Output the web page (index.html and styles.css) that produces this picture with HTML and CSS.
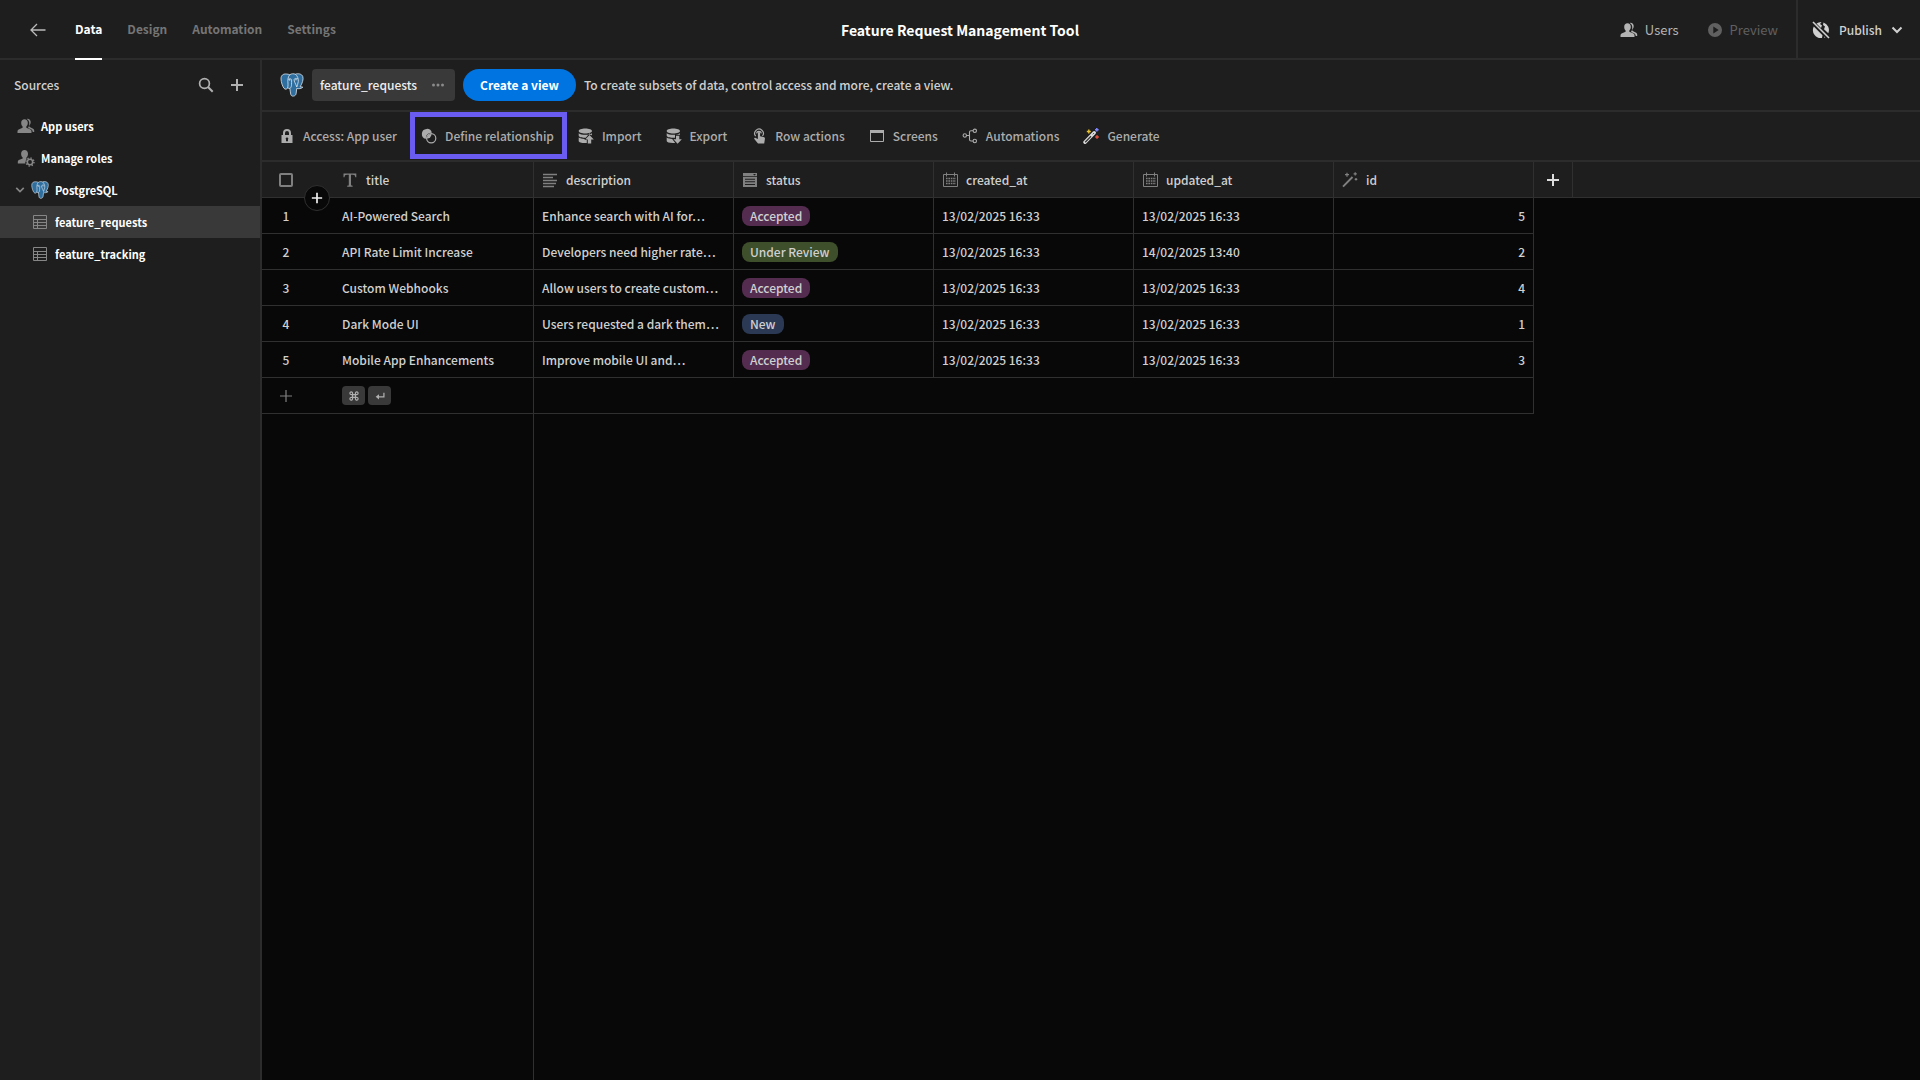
FILE: index.html
```
<!DOCTYPE html>
<html lang="en">
<head>
<meta charset="utf-8">
<title>Feature Request Management Tool</title>
<meta name="viewport" content="width=device-width, initial-scale=1">
<link rel="stylesheet" href="styles.css">
</head>
<body>
<svg class="sprite" aria-hidden="true">
  <symbol id="i-back" viewBox="0 0 16 16"><path d="M15.500 8H1M7 2L1 8l6 6" fill="none" stroke="currentColor" stroke-width="1.300"/></symbol>
  <symbol id="i-users" viewBox="0 0 18 16"><path d="M7.500 1.200c2 0 3.300 1.500 3.300 3.500 0 1.600-.6 2.900-1.500 3.700v1.400l4.200 1.800c.7.300 1 .9 1 1.700V15H.5v-1.700c0-.8.400-1.400 1.100-1.700l4-1.800V8.400C4.700 7.600 4.200 6.300 4.200 4.700c0-2 1.300-3.500 3.300-3.500z" fill="currentColor"/><path d="M10.500.8c1.900 0 3.200 1.400 3.200 3.300 0 1.500-.5 2.600-1.400 3.400v1.300l3.800 2c.7.400 1.100.9 1.100 1.700V14h-1.500c-.1-1.500-.7-2.200-1.700-2.700l-3-1.400c1-1.200 1.400-2.900 1.200-5.300C12 2.900 11.300 1.700 9.700.9z" fill="currentColor"/></symbol>
  <symbol id="i-roles" viewBox="0 0 18 18"><path d="M7.500 1C9.600 1 11 2.600 11 4.700c0 1.700-.6 3-1.600 3.900v1.300l.3.200c-1 1.100-1.500 2.500-1.400 4.300H.8v-1.700c0-.8.400-1.400 1-1.700l3.900-1.600V8.600C4.700 7.700 4.100 6.400 4.100 4.700 4.100 2.600 5.500 1 7.500 1z" fill="currentColor"/><circle cx="13" cy="13" r="2.700" fill="none" stroke="currentColor" stroke-width="1.600"/><circle cx="13" cy="13" r="4" fill="none" stroke="currentColor" stroke-width="1.400" stroke-dasharray="1.300 1.840"/></symbol>
  <symbol id="i-search" viewBox="0 0 16 16"><circle cx="6.500" cy="6.500" r="4.900" fill="none" stroke="currentColor" stroke-width="1.700"/><path d="M10 10l4.700 4.700" stroke="currentColor" stroke-width="2"/></symbol>
  <symbol id="i-plus" viewBox="0 0 14 14"><path d="M7 1v12M1 7h12" stroke="currentColor" stroke-width="2"/></symbol>
  <symbol id="i-plus-thin" viewBox="0 0 14 14"><path d="M7 1v12M1 7h12" stroke="currentColor" stroke-width="1.200"/></symbol>
  <symbol id="i-chevron" viewBox="0 0 12 12"><path d="M1.500 3.500L6 8l4.500-4.500" fill="none" stroke="currentColor" stroke-width="2"/></symbol>
  <symbol id="i-table" viewBox="0 0 16 16"><path d="M1.500 1.500h13v13h-13zM1.500 5.500h13M1.500 8.500h13M1.500 11.500h13M5.500 5.500v9" fill="none" stroke="currentColor"/></symbol>
  <symbol id="i-postgres" viewBox="0 0 24 24"><path d="M6.500 1C3 .6.800 2.600 1 6c.1 3 1.500 7.500 3 9.300 1.300 1.500 2.700.9 3.800-.3l2.100.5c.4 1.500.2 3.500.8 5.700.4 1.500 1.300 2.100 2.700 1.900 1.700-.2 2.600-1.200 2.800-3l.5-4.600c1.800.4 4.700.2 6.100-1.300-.5-.5-1.700-.2-2.700-.4 2.200-3.300 3.600-7.600 2.700-10.200C21.800.8 18.300.2 15.300 1.200 13.700.6 11.500.5 9.800 1.700 8.800 1.300 7.600 1.100 6.500 1z" fill="#2f6f9f" stroke="#dfe7ee" stroke-width=".8"/><path d="M9.800 1.700C7.900 3.500 7.600 7 8 11.200c.1 1.500-.1 2.700-.5 3.600M15.300 1.200c2 1.500 3.300 4.300 3 7.300-.2 1.800-1 3.800-1.500 5.500M8.100 6.300c1.600-.9 3.300-.6 3.500.8.200 1.800-.2 2.800-.1 4.200.1 1.700-.3 3-1.600 4.200M17.800 5.800c-1.400-.7-3.500-.5-3.700.8-.2 1.800 1.500 4 2.700 7.400" fill="none" stroke="#dfe7ee" stroke-width=".8"/><circle cx="9.700" cy="6.900" r=".6" fill="#fff"/><circle cx="16" cy="6.700" r=".6" fill="#fff"/></symbol>
  <symbol id="i-lock" viewBox="0 0 16 16"><path d="M4 7V5a4 4 0 0 1 8 0v2h1.500v8h-11V7zm2 0h4V5a2 2 0 0 0-4 0zm3 6.200v-1.600a1.300 1.300 0 1 0-2 0v1.600z" fill="currentColor" fill-rule="evenodd"/></symbol>
  <symbol id="i-relation" viewBox="0 0 16 16"><circle cx="10.200" cy="10.200" r="4.600" fill="none" stroke="currentColor" stroke-width="1.200"/><path d="M10.900 4.700A5.100 5.100 0 1 0 4.700 10.900a5.600 5.600 0 0 1 6.200-6.200z" fill="currentColor"/><path d="M10.500 6a4.500 4.500 0 0 1-4.600 4.600A4.500 4.500 0 0 1 10.500 6z" fill="currentColor"/></symbol>
  <symbol id="i-import" viewBox="0 0 16 16"><path d="M.7 3C.7 1.500 3.600.5 7.300.5S14 1.500 14 3s-3 2.500-6.700 2.500S.7 4.500.7 3zM.7 5.200c1.300 1 3.800 1.500 6.600 1.500 2.700 0 5.200-.5 6.700-1.500v2.300l-2.500-2.300L7.800 9.700H7C3.300 9.700.7 8.700.7 7.400zM.7 9.600c1.500 1 3.800 1.500 6.500 1.400l-1 .9h2.600V15c-4.600.3-8.100-.6-8.100-2z" fill="currentColor"/><path d="M11.500 7l4.300 4.500h-2.600v4h-3.400v-4H7.200z" fill="currentColor"/></symbol>
  <symbol id="i-export" viewBox="0 0 16 16"><path d="M.7 3C.7 1.500 3.600.5 7.300.5S14 1.500 14 3s-3 2.500-6.700 2.500S.7 4.500.7 3zM.7 5.200c1.300 1 3.800 1.500 6.600 1.500 2.700 0 5.200-.5 6.700-1.500v1.500H9v3H7C3.300 9.700.7 8.700.7 7.400zM.7 9.600c1.500 1 3.500 1.400 5.500 1.400l3 3.900C4.200 15.300.7 14.400.7 13z" fill="currentColor"/><path d="M10 7.700h3.300v3.600h2.500l-4.200 4.400-4.200-4.400H10z" fill="currentColor"/></symbol>
  <symbol id="i-tap" viewBox="0 0 16 16"><path d="M4.700 8.200A4.300 4.300 0 1 1 11.500 8M5.500 5.300a2.500 2.500 0 0 1 4.900 0" fill="none" stroke="currentColor" stroke-width="1.200"/><path d="M6.900 5a1.100 1.100 0 0 1 2.200 0v3.300l3.400.8c1.200.3 1.600.9 1.400 2l-.7 4.400H7L3.300 11c-.5-.7.500-1.600 1.300-1.100L6.900 11z" fill="currentColor"/></symbol>
  <symbol id="i-screen" viewBox="0 0 16 16"><path d="M1.500 2.500h13v11h-13z" fill="none" stroke="currentColor"/><path d="M1 2h14v3H1z" fill="currentColor"/></symbol>
  <symbol id="i-flow" viewBox="0 0 16 16"><g fill="none" stroke="currentColor" stroke-width="1.100"><circle cx="2.800" cy="7.500" r="1.700"/><circle cx="12.800" cy="2.800" r="1.700"/><circle cx="12.800" cy="13" r="1.700"/><path d="M4.500 7.500h3M11 2.800H9c-1 0-1.500.4-1.500 1.300v7.500c0 1 .5 1.400 1.500 1.400h2"/></g></symbol>
  <symbol id="i-generate" viewBox="0 0 16 16"><path d="M2 14.300l9.200-9.500" stroke="#ddd" stroke-width="3.400" stroke-linecap="round"/><path d="M2.200 14.200L8 8.200" stroke="#333" stroke-width="1.300"/><path d="M9.800 6.300l1.200-1.200" stroke="#444" stroke-width="1"/><path d="M5.800 1.500v4M3.800 3.500h4" stroke="#e6c22e" stroke-width="1.400"/><path d="M13.800 0v3.600M12 1.800h3.600" stroke="#7d86ff" stroke-width="1.500"/><path d="M14 7.200v3.600M12.200 9h3.600" stroke="#e8503f" stroke-width="1.500"/></symbol>
  <symbol id="i-type" viewBox="0 0 16 16"><path d="M1.500 1.500h12.800v3.800h-1c-.2-1.800-.7-2.500-2.500-2.500H9v9.800c0 .9.400 1.100 1.600 1.200v.9H5.200v-.9c1.200-.1 1.600-.3 1.600-1.200V2.800H5c-1.800 0-2.300.7-2.500 2.500h-1z" fill="currentColor"/></symbol>
  <symbol id="i-lines" viewBox="0 0 16 16"><path d="M1 2.500h14M1 5.500h10M1 8.500h14M1 11.500h13M1 14.500h11" stroke="currentColor" stroke-width="1.300"/></symbol>
  <symbol id="i-select" viewBox="0 0 16 16"><path d="M1 1h14v3H1zM11 2l1.500 1.500L14 2zM1 4.700h14V15H1zM3 6.700v1h10v-1zm0 2.600v1h10v-1zm0 2.600v1h10v-1z" fill="currentColor" fill-rule="evenodd"/></symbol>
  <symbol id="i-calendar" viewBox="0 0 16 16"><path d="M1.500 2.500h14v12h-14z" fill="none" stroke="currentColor"/><path d="M4.500.5v4M12.500.5v4" stroke="currentColor"/><path d="M4 6.500h10M4 9h10M4 11.500h10" stroke="currentColor" stroke-width="1.600" stroke-dasharray="1.600 .8"/></symbol>
  <symbol id="i-wand" viewBox="0 0 16 16"><path d="M1 14.700L10.500 5" stroke="currentColor" stroke-width="1.900"/><path d="M5 .7v4M3 2.700h4M13.200.2v3.200M11.600 1.800h3.200M14 6v2.600M12.700 7.300h2.600" stroke="currentColor" stroke-width="1.200"/></symbol>
  <symbol id="i-play" viewBox="0 0 16 16"><path d="M8 1a7 7 0 1 0 0 14A7 7 0 0 0 8 1zM6.300 4.600L11.700 8l-5.400 3.400z" fill="currentColor" fill-rule="evenodd"/></symbol>
  <symbol id="i-globe-off" viewBox="0 0 18 18"><path d="M4.500 2.500A8 8 0 0 1 9.500 1L8 3l2 1.500L9 7zM11.500 1.500a8 8 0 0 1 4.800 10.700L12 8.200l1-2.700-2-1.500zM1.800 5.500l8.700 8.800L10 17A8 8 0 0 1 1.800 5.500zM12 15.700l1.500.2-1.500.8z" fill="currentColor"/><path d="M1 1l16 16" stroke="currentColor" stroke-width="1.600"/></symbol>
  <symbol id="i-dots" viewBox="0 0 14 14"><g fill="currentColor"><circle cx="2.500" cy="7" r="1.500"/><circle cx="7" cy="7" r="1.500"/><circle cx="11.500" cy="7" r="1.500"/></g></symbol>
  <symbol id="i-cmd" viewBox="0 0 12 12"><path d="M4.300 4.300H3a1.600 1.600 0 1 1 1.300-1.600v6.600A1.600 1.600 0 1 1 3 7.700h6a1.600 1.600 0 1 1-1.300 1.600V2.700A1.600 1.600 0 1 1 9 4.300z" fill="none" stroke="currentColor" stroke-width="1.400"/></symbol>
  <symbol id="i-enter" viewBox="0 0 12 12"><path d="M10.700 2v5H2.500" fill="none" stroke="currentColor" stroke-width="1.500"/><path d="M4.800 3.800v6.400L.8 7z" fill="currentColor"/></symbol>
</svg>

<div class="app">
  <header class="topbar">
    <nav class="topbar-nav" aria-label="Main">
      <a class="back" href="#" aria-label="Back"><svg class="icon"><use href="#i-back"/></svg></a>
      <a class="tab active" href="#">Data</a>
      <a class="tab" href="#">Design</a>
      <a class="tab" href="#">Automation</a>
      <a class="tab" href="#">Settings</a>
    </nav>
    <h1 class="app-title">Feature Request Management Tool</h1>
    <div class="topbar-actions">
      <button class="top-button"><svg class="icon wide"><use href="#i-users"/></svg>Users</button>
      <button class="top-button" disabled><svg class="icon"><use href="#i-play"/></svg>Preview</button>
      <button class="publish"><svg class="icon wide"><use href="#i-globe-off"/></svg>Publish<svg class="icon small"><use href="#i-chevron"/></svg></button>
    </div>
  </header>

  <div class="body">
    <aside class="sidebar">
      <div class="sidebar-head">
        <h2 class="sidebar-title">Sources</h2>
        <button class="icon-button" aria-label="Search"><svg class="icon"><use href="#i-search"/></svg></button>
        <button class="icon-button" aria-label="Add source"><svg class="icon medium"><use href="#i-plus"/></svg></button>
      </div>
      <nav class="sources" aria-label="Sources">
        <a class="source" href="#"><svg class="icon wide"><use href="#i-users"/></svg>App users</a>
        <a class="source" href="#"><svg class="icon wide"><use href="#i-roles"/></svg>Manage roles</a>
        <a class="source parent" href="#"><svg class="icon tiny"><use href="#i-chevron"/></svg><svg class="icon wide"><use href="#i-postgres"/></svg>PostgreSQL</a>
        <a class="source child selected" href="#"><svg class="icon"><use href="#i-table"/></svg>feature_requests</a>
        <a class="source child" href="#"><svg class="icon"><use href="#i-table"/></svg>feature_tracking</a>
      </nav>
    </aside>

    <main class="main">
      <div class="viewbar">
        <svg class="logo"><use href="#i-postgres"/></svg>
        <button class="view-tab">feature_requests<svg class="icon medium"><use href="#i-dots"/></svg></button>
        <button class="cta">Create a view</button>
        <p class="hint">To create subsets of data, control access and more, create a view.</p>
      </div>

      <div class="toolbar">
        <button class="tool"><svg class="icon"><use href="#i-lock"/></svg>Access: App user</button>
        <button class="tool highlighted"><svg class="icon"><use href="#i-relation"/></svg>Define relationship</button>
        <button class="tool"><svg class="icon"><use href="#i-import"/></svg>Import</button>
        <button class="tool"><svg class="icon"><use href="#i-export"/></svg>Export</button>
        <button class="tool"><svg class="icon"><use href="#i-tap"/></svg>Row actions</button>
        <button class="tool"><svg class="icon"><use href="#i-screen"/></svg>Screens</button>
        <button class="tool"><svg class="icon"><use href="#i-flow"/></svg>Automations</button>
        <button class="tool"><svg class="icon"><use href="#i-generate"/></svg>Generate</button>
      </div>

      <div class="grid">
        <table class="rows">
          <colgroup><col class="c-gutter"><col class="c-data"><col class="c-data"><col class="c-data"><col class="c-data"><col class="c-data"><col class="c-data"><col class="c-add"><col></colgroup>
          <thead>
            <tr>
              <th class="gutter"><input class="check" type="checkbox" aria-label="Select all rows"><button class="insert" aria-label="Insert row"><svg class="icon small"><use href="#i-plus"/></svg></button></th>
              <th><span class="head"><svg class="icon"><use href="#i-type"/></svg>title</span></th>
              <th><span class="head"><svg class="icon"><use href="#i-lines"/></svg>description</span></th>
              <th><span class="head"><svg class="icon"><use href="#i-select"/></svg>status</span></th>
              <th><span class="head"><svg class="icon"><use href="#i-calendar"/></svg>created_at</span></th>
              <th><span class="head"><svg class="icon"><use href="#i-calendar"/></svg>updated_at</span></th>
              <th><span class="head"><svg class="icon"><use href="#i-wand"/></svg>id</span></th>
              <th class="add-col"><button class="icon-button bright" aria-label="Add column"><svg class="icon medium"><use href="#i-plus"/></svg></button></th>
              <th class="rest"></th>
            </tr>
          </thead>
          <tbody>
            <tr><td class="gutter">1</td><td>AI-Powered Search</td><td>Enhance search with AI for…</td><td><span class="pill accepted">Accepted</span></td><td>13/02/2025 16:33</td><td>13/02/2025 16:33</td><td class="num">5</td></tr>
            <tr><td class="gutter">2</td><td>API Rate Limit Increase</td><td>Developers need higher rate…</td><td><span class="pill review">Under Review</span></td><td>13/02/2025 16:33</td><td>14/02/2025 13:40</td><td class="num">2</td></tr>
            <tr><td class="gutter">3</td><td>Custom Webhooks</td><td>Allow users to create custom…</td><td><span class="pill accepted">Accepted</span></td><td>13/02/2025 16:33</td><td>13/02/2025 16:33</td><td class="num">4</td></tr>
            <tr><td class="gutter">4</td><td>Dark Mode UI</td><td>Users requested a dark them…</td><td><span class="pill new">New</span></td><td>13/02/2025 16:33</td><td>13/02/2025 16:33</td><td class="num">1</td></tr>
            <tr><td class="gutter">5</td><td>Mobile App Enhancements</td><td>Improve mobile UI and…</td><td><span class="pill accepted">Accepted</span></td><td>13/02/2025 16:33</td><td>13/02/2025 16:33</td><td class="num">3</td></tr>
            <tr><td class="gutter"><button class="icon-button dim" aria-label="Add row"><svg class="icon medium"><use href="#i-plus-thin"/></svg></button></td><td><span class="keys"><kbd class="key"><svg class="icon mini"><use href="#i-cmd"/></svg></kbd><kbd class="key"><svg class="icon mini"><use href="#i-enter"/></svg></kbd></span></td><td colspan="5"></td></tr>
          </tbody>
        </table>
        <div class="sticky-edge"></div>
      </div>
    </main>
  </div>
</div>
</body>
</html>
```
FILE: styles.css
```
:root {
  --surface: #1e1e1e;
  --line: #2c2c2c;
  --canvas: #080808;
  --text: #d0d0d0;
}

* { box-sizing: border-box; }

body {
  margin: 0;
  background: var(--canvas);
  color: var(--text);
  font: 500 12px/20px "Noto Sans CJK SC", "Noto Sans", sans-serif;
}

button {
  padding: 0;
  border: 0;
  background: none;
  color: inherit;
  font: inherit;
}

a { color: inherit; text-decoration: none; }

.sprite { display: none; }
.icon { flex: none; display: block; width: 16px; height: 16px; }
.icon.wide { width: 18px; height: 18px; }
.icon.medium { width: 14px; height: 14px; }
.icon.small { width: 12px; height: 12px; }
.icon.tiny, .icon.mini { width: 10px; height: 10px; }

.app { display: flex; flex-direction: column; min-height: 100vh; }

/* Top bar */
.topbar {
  display: grid;
  grid-template-columns: 1fr auto 1fr;
  height: 60px;
  border-bottom: 2px solid var(--line);
  background: var(--surface);
}
.topbar-nav { display: flex; gap: 25px; padding-left: 30px; }
.back { display: flex; align-items: center; margin-right: 4px; color: #bbb; }
.tab { display: flex; align-items: center; height: 60px; border-bottom: 2px solid transparent; color: #757575; font-weight: 700; }
.tab.active { border-color: #fff; color: #fff; }
.app-title { margin: 0; align-self: center; color: #fff; font-size: 14px; font-weight: 700; }
.topbar-actions { display: flex; justify-content: flex-end; }
.top-button { display: flex; align-items: center; gap: 7px; margin-right: 28px; color: #b4b4b4; font-size: 13px; font-weight: 400; }
.top-button:disabled { margin-right: 18px; color: #606060; }
.publish { display: flex; align-items: center; gap: 9px; padding: 0 17px 0 14px; border-left: 2px solid var(--line); }

.body { display: flex; flex: 1; }

/* Sidebar */
.sidebar { flex: none; width: 262px; border-right: 2px solid var(--line); background: var(--surface); }
.sidebar-head { display: flex; align-items: center; gap: 16px; height: 50px; padding: 0 16px 0 14px; }
.sidebar-title { flex: 1; margin: 0; font-size: 12px; font-weight: 500; }
.icon-button { display: flex; align-items: center; justify-content: center; color: #b0b0b0; }
.icon-button.bright { width: 100%; color: #ddd; }
.icon-button.dim { width: 100%; color: #808080; }
.sources { display: flex; flex-direction: column; }
.source { display: flex; align-items: center; gap: 6px; height: 32px; padding-left: 17px; color: #fff; font-size: 11px; font-weight: 700; }
.source .icon { color: #868686; }
.source.parent { padding-left: 15px; }
.source.child { gap: 7px; padding-left: 32px; }
.source.selected { background: #393939; }

/* View bar */
.main { display: flex; flex: 1; flex-direction: column; min-width: 0; }
.viewbar { display: flex; align-items: center; gap: 8px; height: 52px; padding-left: 18px; border-bottom: 2px solid var(--line); background: var(--surface); }
.logo { width: 24px; height: 24px; }
.view-tab { display: flex; align-items: center; gap: 14px; height: 32px; padding: 0 10px 0 8px; border-radius: 4px; background: #393939; color: #eee; }
.view-tab .icon { color: #8a8a8a; }
.cta { height: 32px; padding: 0 17px; border-radius: 16px; background: #0074e0; color: #fff; font-weight: 700; }
.hint { margin: 0; }

/* Toolbar */
.toolbar { display: flex; align-items: center; gap: 24px; height: 50px; padding-left: 17px; border-bottom: 2px solid var(--line); background: var(--surface); color: #acacac; }
.tool { position: relative; display: flex; align-items: center; gap: 8px; }
.highlighted::after { content: ""; position: absolute; inset: -14px -13px -13px -11px; border: 5px solid #6a5cf0; }

/* Data grid */
.grid { display: flex; flex: 1; flex-direction: column; }
.rows { width: 100%; table-layout: fixed; border-spacing: 0; }
.c-gutter { width: 72px; }
.c-data { width: 200px; }
.c-add { width: 39px; }
.rows th, .rows td { height: 36px; padding: 0 8px; border-right: 1px solid #303030; border-bottom: 1px solid #303030; overflow: hidden; text-align: left; white-space: nowrap; }
.rows th { background: var(--surface); font-weight: 500; }
.rows .gutter { position: relative; padding: 0 24px 0 0; border-right: 0; overflow: visible; text-align: center; }
.rows .rest { border-right: 0; }
.rows .num { text-align: right; }
.rows .add-col { padding: 0; }
.head { display: flex; align-items: center; gap: 8px; }
.head .icon { color: #808080; }
.check { display: block; width: 14px; height: 14px; margin: 0 auto; appearance: none; border: 2px solid #808080; border-radius: 2px; }
.insert { position: absolute; z-index: 1; right: 4px; bottom: -14px; display: flex; align-items: center; justify-content: center; width: 26px; height: 26px; border: 1px solid #303030; border-radius: 50%; background: var(--canvas); color: #eee; }
.pill { display: inline-block; height: 20px; padding: 0 8px; border-radius: 8px; vertical-align: middle; }
.accepted { background: #532c4f; }
.review { background: #3e4f2c; }
.new { background: #2b3955; }
.keys { display: flex; gap: 3px; }
.key { display: flex; align-items: center; justify-content: center; width: 23px; height: 19px; border-radius: 4px; background: #393939; color: #b0b0b0; }
.sticky-edge { flex: 1; width: 272px; border-right: 1px solid #303030; }
```
